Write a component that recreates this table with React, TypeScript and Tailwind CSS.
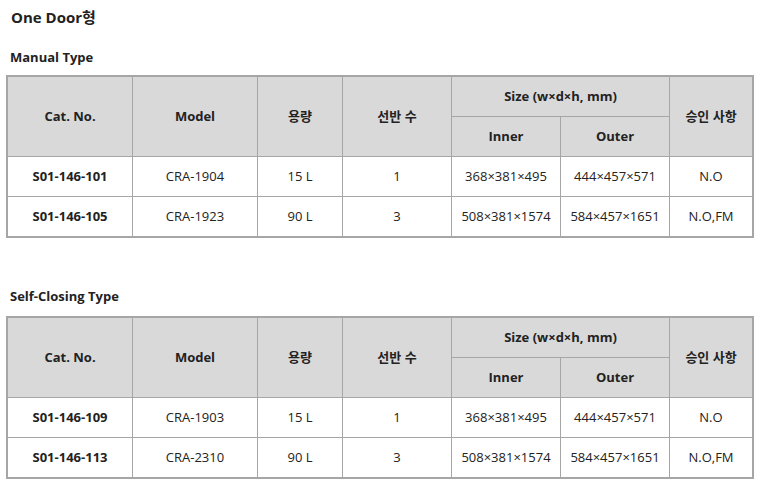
const rows1 = [
  { cat: "S01-146-101", model: "CRA-1904", vol: "15 L", shelf: "1", inner: "368×381×495", outer: "444×457×571", appr: "N.O" },
  { cat: "S01-146-105", model: "CRA-1923", vol: "90 L", shelf: "3", inner: "508×381×1574", outer: "584×457×1651", appr: "N.O,FM" },
];

const rows2 = [
  { cat: "S01-146-109", model: "CRA-1903", vol: "15 L", shelf: "1", inner: "368×381×495", outer: "444×457×571", appr: "N.O" },
  { cat: "S01-146-113", model: "CRA-2310", vol: "90 L", shelf: "3", inner: "508×381×1574", outer: "584×457×1651", appr: "N.O,FM" },
];

type Row = (typeof rows1)[number];

function Head({ children, className = "" }: { children: React.ReactNode; className?: string }) {
  return (
    <div className={`flex items-center justify-center bg-[#d9d9d9] font-bold text-[#222] ${className}`}>
      {children}
    </div>
  );
}

function Cell({ children, className = "" }: { children: React.ReactNode; className?: string }) {
  return <div className={`flex items-center justify-center bg-white ${className}`}>{children}</div>;
}

function SpecTable({ rows }: { rows: Row[] }) {
  return (
    <div className="ml-[6px] grid w-[748px] grid-cols-[124px_124px_84px_108px_108px_108px_82px] grid-rows-[39px_39px_39px_39px] gap-px border-2 border-[#a6a6a6] bg-[#a6a6a6] text-[13px] text-[#222]">
      <Head className="row-span-2">Cat. No.</Head>
      <Head className="row-span-2">Model</Head>
      <Head className="row-span-2">용량</Head>
      <Head className="row-span-2">선반 수</Head>
      <Head className="col-span-2">Size (w×d×h, mm)</Head>
      <Head className="row-span-2">승인 사항</Head>
      <Head>Inner</Head>
      <Head>Outer</Head>
      {rows.map((r) => (
        <div key={r.cat} className="contents">
          <Cell className="bg-[#f2f2f2] font-bold">{r.cat}</Cell>
          <Cell>{r.model}</Cell>
          <Cell>{r.vol}</Cell>
          <Cell>{r.shelf}</Cell>
          <Cell>{r.inner}</Cell>
          <Cell>{r.outer}</Cell>
          <Cell>{r.appr}</Cell>
        </div>
      ))}
    </div>
  );
}

export default function App() {
  return (
    <div
      className="h-[481px] w-[758px] bg-white text-[#222]"
      style={{ fontFamily: '"Open Sans", "Noto Sans CJK KR", sans-serif' }}
    >
      <h2 className="pl-[11px] pt-[5px] text-[15px] font-bold leading-[24px]">One Door형</h2>
      <h3 className="mt-[18px] pl-[10px] text-[13px] font-bold leading-[20px]">Manual Type</h3>
      <div className="mt-[8px]">
        <SpecTable rows={rows1} />
      </div>
      <h3 className="mt-[48px] pl-[10px] text-[13px] font-bold leading-[20px]">Self-Closing Type</h3>
      <div className="mt-[10px]">
        <SpecTable rows={rows2} />
      </div>
    </div>
  );
}
